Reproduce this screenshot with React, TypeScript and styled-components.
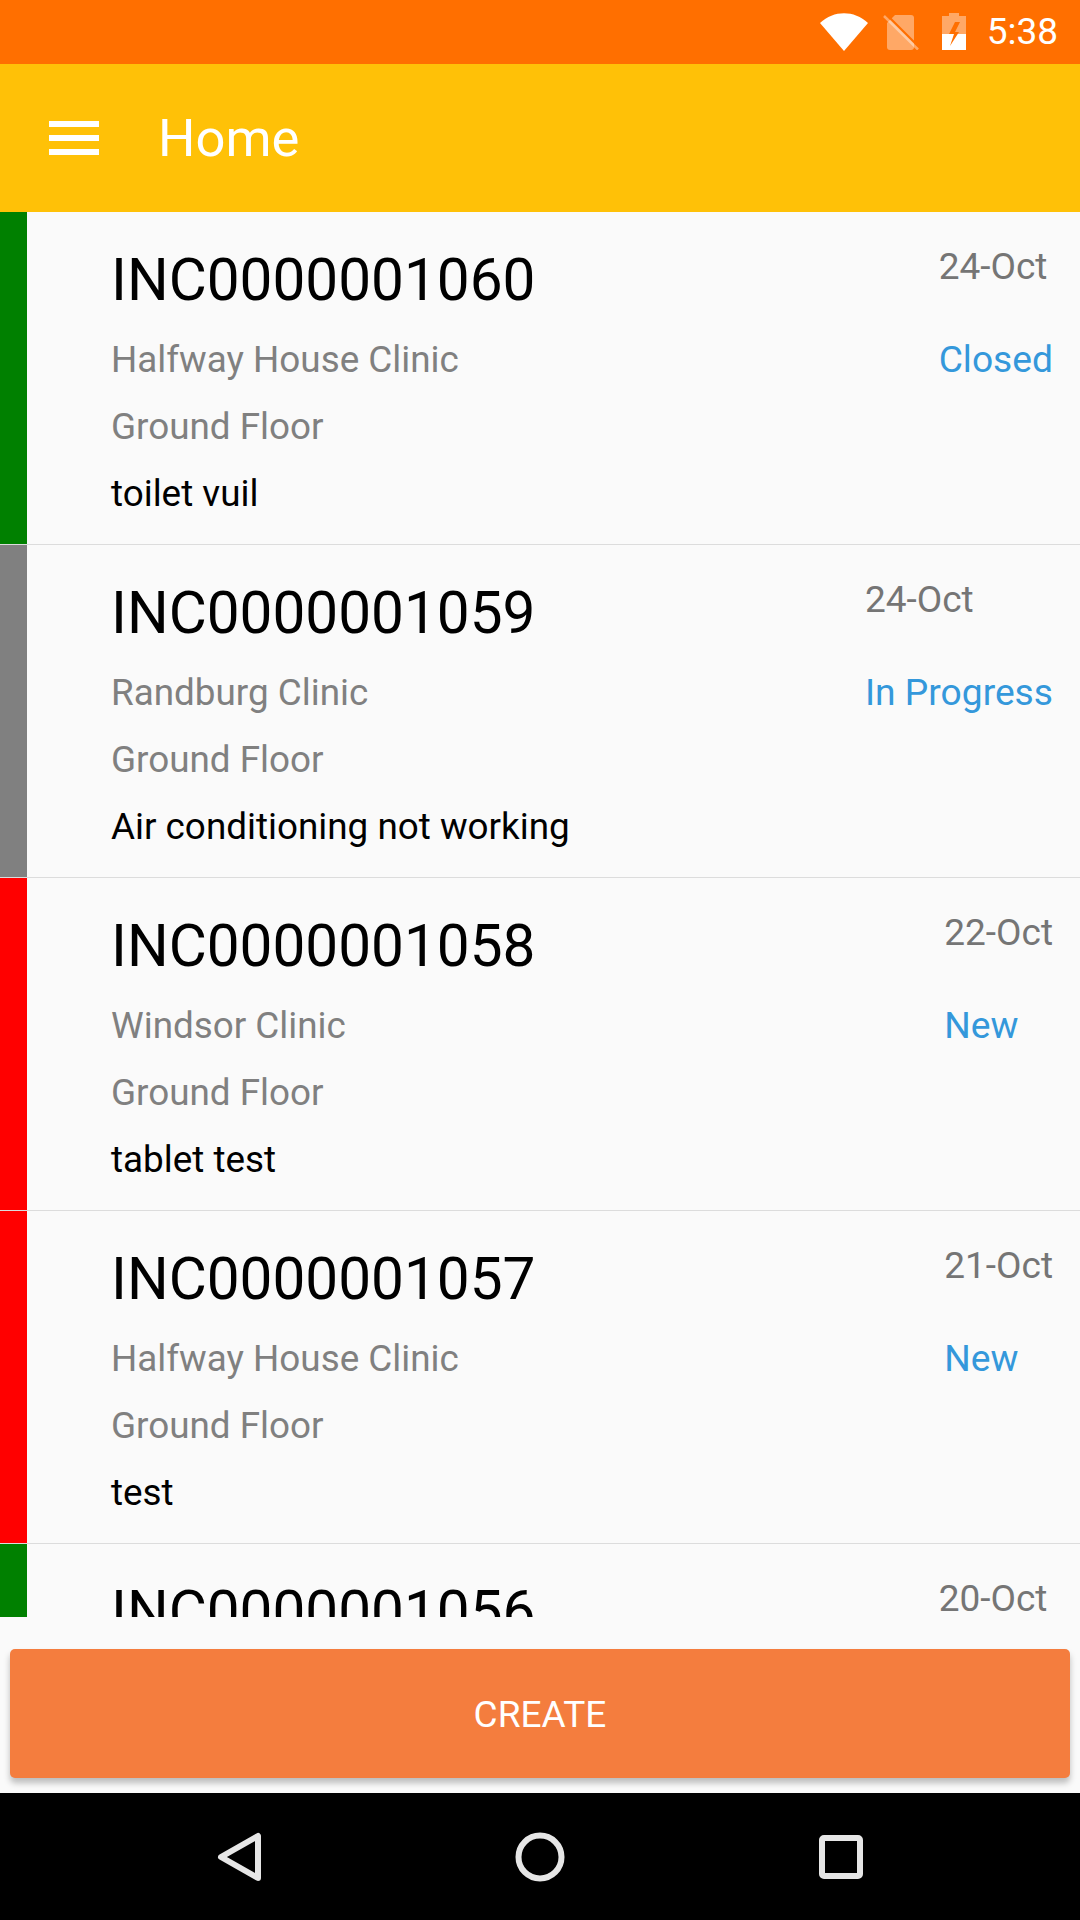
import React from 'react'
import styled, { createGlobalStyle } from 'styled-components'

const GlobalStyle = createGlobalStyle`
  html, body {
    margin: 0;
    padding: 0;
    background: #fafafa;
    font-family: Roboto, "Liberation Sans", sans-serif;
  }
`

const Screen = styled.div`
  width: 1080px;
  height: 1920px;
  display: flex;
  flex-direction: column;
  overflow: hidden;
  background: #fafafa;
`

const StatusBar = styled.div`
  height: 64px;
  flex: none;
  background: #ff6f00;
  display: flex;
  align-items: center;
  justify-content: flex-end;
  padding-right: 22px;
  color: #fff;
`

const StatusIcon = styled.svg<{ $gap?: number }>`
  display: block;
  flex: none;
  margin-left: ${(p) => p.$gap ?? 0}px;
`

const Clock = styled.span`
  font-size: 37px;
  line-height: 64px;
  margin-left: 21px;
`

const Toolbar = styled.header`
  height: 148px;
  flex: none;
  background: #ffc107;
  display: flex;
  align-items: center;
  padding-left: 49px;
`

const MenuIcon = styled.svg`
  display: block;
  flex: none;
`

const Title = styled.h1`
  margin: 0 0 0 59px;
  font-size: 52.5px;
  font-weight: 400;
  color: #fff;
`

const List = styled.main`
  flex: 1;
  min-height: 0;
  overflow: hidden;
`

const Row = styled.article`
  height: 332px;
  display: flex;
  border-bottom: 1px solid #dcdcdc;
`

const StateBar = styled.div<{ $color: string }>`
  width: 27px;
  flex: none;
  background: ${(p) => p.$color};
`

const Details = styled.div`
  flex: 1;
  padding: 33px 0 0 84px;
`

const Number = styled.div`
  font-size: 58.5px;
  line-height: 70px;
  color: #000;
  margin-bottom: 11px;
`

const Line = styled.div<{ $dark?: boolean }>`
  font-size: 36.85px;
  line-height: 67px;
  color: ${(p) => (p.$dark ? '#000' : '#808080')};
`

const Side = styled.div`
  flex: none;
  margin-right: 27px;
  padding-top: 21px;
`

const DateText = styled.div`
  font-size: 37px;
  line-height: 67px;
  color: #757575;
  margin-bottom: 26px;
`

const Status = styled.div`
  font-size: 37.2px;
  line-height: 67px;
  color: #3498db;
`

const Footer = styled.div`
  height: 176px;
  flex: none;
  box-sizing: border-box;
  padding: 32px 10px 0;
  background: #fafafa;
`

const CreateButton = styled.button`
  width: 100%;
  height: 129px;
  border: 0;
  border-radius: 5px;
  padding: 2px 0 0;
  background: #f47d3e;
  color: #fff;
  font-family: inherit;
  font-size: 37px;
  box-shadow: 0 5px 6px rgba(0, 0, 0, 0.25);
`

const NavBar = styled.nav`
  height: 127px;
  flex: none;
  background: #000;
`

const NavIcons = styled.svg`
  display: block;
`

const incidents = [
  { id: 'INC0000001060', site: 'Halfway House Clinic', text: 'toilet vuil', date: '24-Oct', status: 'Closed', color: '#008000' },
  { id: 'INC0000001059', site: 'Randburg Clinic', text: 'Air conditioning not working', date: '24-Oct', status: 'In Progress', color: '#808080' },
  { id: 'INC0000001058', site: 'Windsor Clinic', text: 'tablet test', date: '22-Oct', status: 'New', color: '#ff0000' },
  { id: 'INC0000001057', site: 'Halfway House Clinic', text: 'test', date: '21-Oct', status: 'New', color: '#ff0000' },
  { id: 'INC0000001056', site: 'Halfway House Clinic', text: 'test', date: '20-Oct', status: 'Closed', color: '#008000' }
]

const App = () => (
  <>
    <GlobalStyle />
    <Screen>
      <StatusBar>
        <StatusIcon width="48" height="38" viewBox="0 0 48 38">
          <path d="M0 10 C14 -3 34 -3 48 10 L24 38 Z" fill="#fff" />
        </StatusIcon>
        <StatusIcon $gap={15} width="36" height="36" viewBox="0 0 36 36">
          <path d="M12 1 H28 Q31 1 31 4 V33 Q31 36 28 36 H7 Q4 36 4 33 V9 Z" fill="#fff" opacity="0.4" />
          <path d="M3 0 L35 32" stroke="#ff6f00" strokeWidth="2" />
          <path d="M1 2 L35 35.5" stroke="#fff" strokeWidth="2.5" opacity="0.4" />
        </StatusIcon>
        <StatusIcon $gap={23} width="24" height="38" viewBox="0 0 24 38">
          <path d="M7 0 H17 V3 H24 V21 H0 V3 H7 Z" fill="#fff" opacity="0.4" />
          <path d="M0 21 H24 V37 H0 Z" fill="#fff" />
          <path d="M13 9 L7 21 H12 L8 33 L17 19 H13 L18 9 Z" fill="#ff6f00" />
        </StatusIcon>
        <Clock>5:38</Clock>
      </StatusBar>
      <Toolbar>
        <MenuIcon width="50" height="34" viewBox="0 0 50 34">
          <path d="M0 0 H50 V6 H0 Z M0 14 H50 V20 H0 Z M0 28 H50 V34 H0 Z" fill="#fff" />
        </MenuIcon>
        <Title>Home</Title>
      </Toolbar>
      <List>
        {incidents.map((item) => (
          <Row key={item.id}>
            <StateBar $color={item.color} />
            <Details>
              <Number>{item.id}</Number>
              <Line>{item.site}</Line>
              <Line>Ground Floor</Line>
              <Line $dark>{item.text}</Line>
            </Details>
            <Side>
              <DateText>{item.date}</DateText>
              <Status>{item.status}</Status>
            </Side>
          </Row>
        ))}
      </List>
      <Footer>
        <CreateButton>CREATE</CreateButton>
      </Footer>
      <NavBar>
        <NavIcons width="1080" height="127" viewBox="0 0 1080 127">
          <path d="M258 43 V85 L221 64 Z" fill="none" stroke="#e6e6e6" strokeWidth="6" strokeLinejoin="round" />
          <circle cx="540" cy="64" r="21.5" fill="none" stroke="#e6e6e6" strokeWidth="6" />
          <rect x="822" y="45" width="38" height="38" rx="2" fill="none" stroke="#e6e6e6" strokeWidth="6" />
        </NavIcons>
      </NavBar>
    </Screen>
  </>
)

export default App
